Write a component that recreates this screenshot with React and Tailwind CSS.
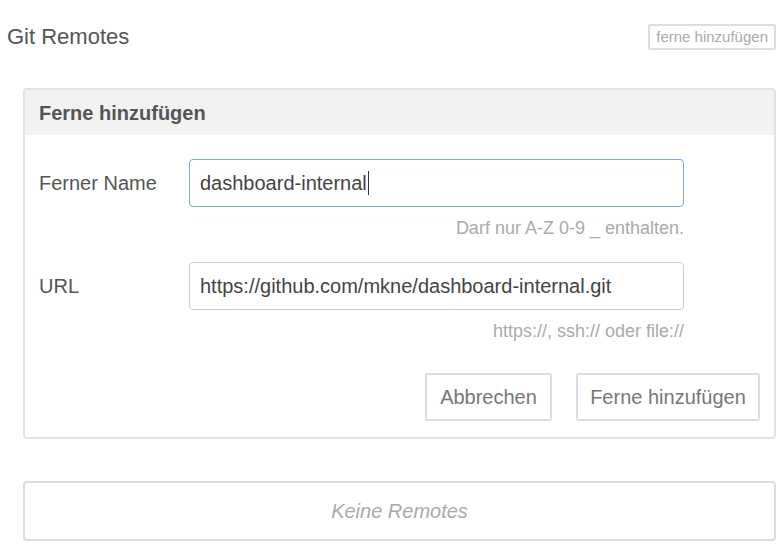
const font = { fontFamily: '"Liberation Sans", Arial, sans-serif' };

const Field = ({ label, value, help, focused }) => (
  <div>
    <div className="flex items-center">
      <label className="w-[150px] text-[20px] text-[#555]">{label}</label>
      <div
        className={`flex h-[48px] w-[495px] items-center rounded-[4px] border px-[10px] text-[20px] text-[#444] ${
          focused ? 'border-[#7aa7e0]' : 'border-[#ccc]'
        }`}
      >
        {value}
        {focused && <span className="ml-px h-[24px] w-px bg-[#333]" />}
      </div>
    </div>
    <div className="mt-[11px] w-[645px] text-right text-[18px] leading-[20px] text-[#aaa]">
      {help}
    </div>
  </div>
);

export default function App() {
  return (
    <div className="min-h-[544px] bg-white px-[7px]" style={font}>
      <div className="flex items-center justify-between pt-[20px]">
        <h1 className="text-[22px] font-normal text-[#555]">Git Remotes</h1>
        <button className="h-[26px] rounded-[2px] border-2 border-[#ddd] px-[6px] text-[15px] text-[#aaa]">
          ferne hinzufügen
        </button>
      </div>

      <div className="mt-[35px] ml-[16px] overflow-hidden rounded-[4px] border-2 border-[#e2e2e2]">
        <div className="flex h-[45px] items-center bg-[#f2f2f2] px-[14px] text-[20px] font-bold text-[#555]">
          Ferne hinzufügen
        </div>
        <div className="px-[14px] pt-[24px] pb-[16px]">
          <Field
            label="Ferner Name"
            value="dashboard-internal"
            help="Darf nur A-Z 0-9 _ enthalten."
            focused
          />
          <div className="mt-[24px]">
            <Field
              label="URL"
              value="https://github.com/mkne/dashboard-internal.git"
              help="https://, ssh:// oder file://"
            />
          </div>
          <div className="mt-[32px] flex justify-end gap-[24px]">
            <button className="h-[48px] w-[127px] rounded-[2px] border-2 border-[#ddd] text-[20px] text-[#777]">
              Abbrechen
            </button>
            <button className="h-[48px] w-[184px] rounded-[2px] border-2 border-[#ddd] text-[20px] text-[#777]">
              Ferne hinzufügen
            </button>
          </div>
        </div>
      </div>

      <div className="mt-[42px] ml-[16px] flex h-[60px] items-center justify-center rounded-[4px] border-2 border-[#ddd] text-[20px] italic text-[#aaa]">
        Keine Remotes
      </div>
    </div>
  );
}
